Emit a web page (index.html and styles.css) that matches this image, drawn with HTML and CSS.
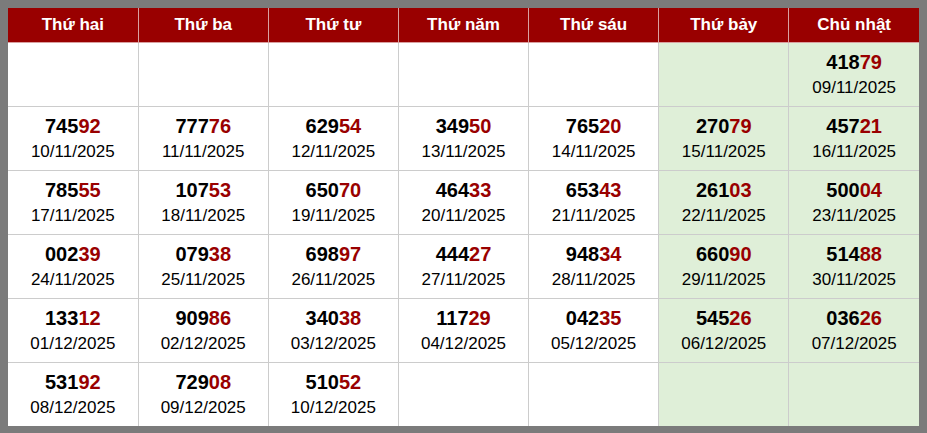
FILE: index.html
```html
<!DOCTYPE html>
<html lang="vi">
<head>
<meta charset="utf-8">
<link rel="stylesheet" href="styles.css">
</head>
<body>
<table class="cal">
  <colgroup>
    <col class="c"><col class="c"><col class="c"><col class="c"><col class="c"><col class="c"><col class="c">
  </colgroup>
  <thead>
    <tr><th>Thứ hai</th><th>Thứ ba</th><th>Thứ tư</th><th>Thứ năm</th><th>Thứ sáu</th><th>Thứ bảy</th><th>Chủ nhật</th></tr>
  </thead>
  <tbody>
    <tr>
      <td></td><td></td><td></td><td></td><td></td><td class="we"></td>
      <td class="we"><div class="n">418<span>79</span></div><div class="d">09/11/2025</div></td>
    </tr>
    <tr>
      <td><div class="n">745<span>92</span></div><div class="d">10/11/2025</div></td>
      <td><div class="n">777<span>76</span></div><div class="d">11/11/2025</div></td>
      <td><div class="n">629<span>54</span></div><div class="d">12/11/2025</div></td>
      <td><div class="n">349<span>50</span></div><div class="d">13/11/2025</div></td>
      <td><div class="n">765<span>20</span></div><div class="d">14/11/2025</div></td>
      <td class="we"><div class="n">270<span>79</span></div><div class="d">15/11/2025</div></td>
      <td class="we"><div class="n">457<span>21</span></div><div class="d">16/11/2025</div></td>
    </tr>
    <tr>
      <td><div class="n">785<span>55</span></div><div class="d">17/11/2025</div></td>
      <td><div class="n">107<span>53</span></div><div class="d">18/11/2025</div></td>
      <td><div class="n">650<span>70</span></div><div class="d">19/11/2025</div></td>
      <td><div class="n">464<span>33</span></div><div class="d">20/11/2025</div></td>
      <td><div class="n">653<span>43</span></div><div class="d">21/11/2025</div></td>
      <td class="we"><div class="n">261<span>03</span></div><div class="d">22/11/2025</div></td>
      <td class="we"><div class="n">500<span>04</span></div><div class="d">23/11/2025</div></td>
    </tr>
    <tr>
      <td><div class="n">002<span>39</span></div><div class="d">24/11/2025</div></td>
      <td><div class="n">079<span>38</span></div><div class="d">25/11/2025</div></td>
      <td><div class="n">698<span>97</span></div><div class="d">26/11/2025</div></td>
      <td><div class="n">444<span>27</span></div><div class="d">27/11/2025</div></td>
      <td><div class="n">948<span>34</span></div><div class="d">28/11/2025</div></td>
      <td class="we"><div class="n">660<span>90</span></div><div class="d">29/11/2025</div></td>
      <td class="we"><div class="n">514<span>88</span></div><div class="d">30/11/2025</div></td>
    </tr>
    <tr>
      <td><div class="n">133<span>12</span></div><div class="d">01/12/2025</div></td>
      <td><div class="n">909<span>86</span></div><div class="d">02/12/2025</div></td>
      <td><div class="n">340<span>38</span></div><div class="d">03/12/2025</div></td>
      <td><div class="n">117<span>29</span></div><div class="d">04/12/2025</div></td>
      <td><div class="n">042<span>35</span></div><div class="d">05/12/2025</div></td>
      <td class="we"><div class="n">545<span>26</span></div><div class="d">06/12/2025</div></td>
      <td class="we"><div class="n">036<span>26</span></div><div class="d">07/12/2025</div></td>
    </tr>
    <tr>
      <td><div class="n">531<span>92</span></div><div class="d">08/12/2025</div></td>
      <td><div class="n">729<span>08</span></div><div class="d">09/12/2025</div></td>
      <td><div class="n">510<span>52</span></div><div class="d">10/12/2025</div></td>
      <td></td><td></td><td class="we"></td><td class="we"></td>
    </tr>
  </tbody>
</table>
</body>
</html>
```

FILE: styles.css
```css
html, body {
  margin: 0;
  padding: 0;
}
body {
  background: #7b7b7b;
  padding: 8px 8px 8px 8px;
  font-family: "Liberation Sans", Arial, sans-serif;
}
.cal {
  width: 911px;
  border-collapse: collapse;
  table-layout: fixed;
  background: #fff;
}
.cal .c {
  width: 130px;
}
.cal th {
  background: #990000;
  color: #fff;
  font-size: 17px;
  font-weight: bold;
  height: 34px;
  padding: 0;
  border: 1px solid #d9a0a0;
  border-top: none;
  text-align: center;
  vertical-align: middle;
}
.cal th:first-child { border-left: none; }
.cal th:last-child { border-right: none; }
.cal td {
  height: 62px;
  padding: 1px 0 0 0;
  border: 1px solid #cccccc;
  text-align: center;
  vertical-align: middle;
  color: #000;
}
.cal td:first-child { border-left: none; }
.cal td:last-child { border-right: none; }
.cal tbody tr:last-child td { border-bottom: none; }
.cal td.we {
  background: #dfefd8;
}
.n {
  font-size: 20px;
  font-weight: bold;
  line-height: 26px;
}
.n span {
  color: #990000;
}
.d {
  font-size: 17px;
  line-height: 26px;
}
```
